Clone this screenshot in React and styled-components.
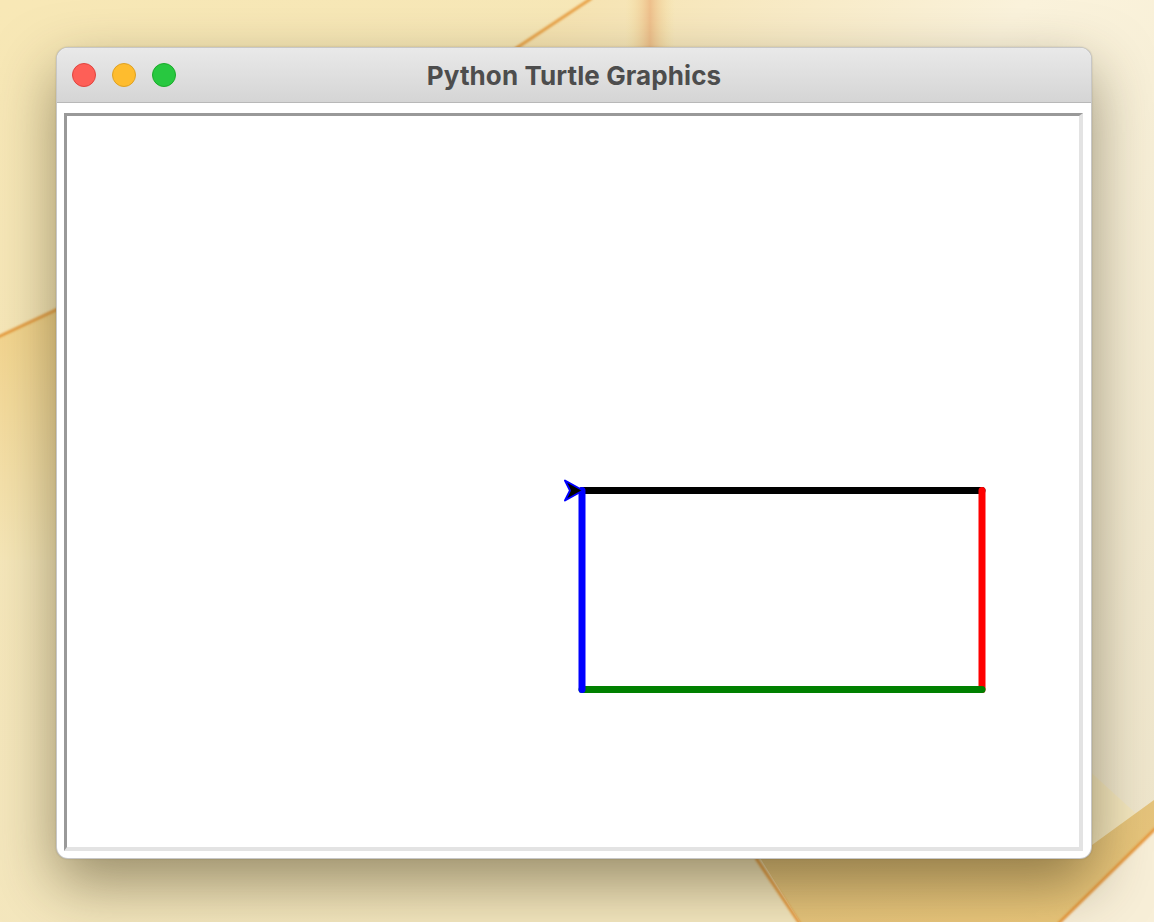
import React from 'react';
import styled, { createGlobalStyle } from 'styled-components';

const lights = [
  { fill: '#fe5f57', edge: '#e0443e' },
  { fill: '#febc2e', edge: '#dea123' },
  { fill: '#28c840', edge: '#1aab29' },
];

// pen strokes in canvas coordinates, drawn in order
const strokes = [
  { color: '#000000', x1: 515, y1: 374, x2: 915, y2: 374 },
  { color: '#ff0000', x1: 915, y1: 374, x2: 915, y2: 573 },
  { color: '#008000', x1: 915, y1: 573, x2: 515, y2: 573 },
  { color: '#0000ff', x1: 515, y1: 573, x2: 515, y2: 374 },
];

const App = () => {
  return (
    <>
      <GlobalStyle />
      <Desktop>
        <Wallpaper viewBox="0 0 1154 922" preserveAspectRatio="none">
          <defs>
            <linearGradient id="base" x1="0" y1="0" x2="0.4" y2="1">
              <stop offset="0" stopColor="#f8e8b6" />
              <stop offset="1" stopColor="#f4e7bf" />
            </linearGradient>
            <linearGradient id="topRight" x1="0" y1="0" x2="1" y2="1">
              <stop offset="0" stopColor="#f6e2ad" />
              <stop offset="0.4" stopColor="#fbf3dc" />
              <stop offset="1" stopColor="#efe6cc" />
            </linearGradient>
            <linearGradient id="leftBand" x1="0" y1="0" x2="0" y2="1">
              <stop offset="0" stopColor="#eebc5c" />
              <stop offset="0.35" stopColor="#f3d58e" />
              <stop offset="1" stopColor="#f6e7b8" />
            </linearGradient>
            <linearGradient id="bottomGold" x1="0" y1="0" x2="1" y2="1">
              <stop offset="0" stopColor="#dfc07e" />
              <stop offset="1" stopColor="#ecc87a" />
            </linearGradient>
            <linearGradient id="streak" x1="0" y1="0" x2="1" y2="0">
              <stop offset="0" stopColor="#f6e4a4" stopOpacity="0" />
              <stop offset="0.5" stopColor="#efc08c" />
              <stop offset="1" stopColor="#f6e4a4" stopOpacity="0" />
            </linearGradient>
            <filter id="soft">
              <feGaussianBlur stdDeviation="1.2" />
            </filter>
          </defs>
          <rect x="0" y="0" width="1154" height="922" fill="url(#base)" />
          <polygon points="590,0 1154,0 1154,830 760,470 515,47" fill="url(#topRight)" />
          <rect x="625" y="0" width="50" height="48" fill="url(#streak)" />
          <line x1="515" y1="49" x2="592" y2="-2" stroke="#e9a246" strokeWidth="3" filter="url(#soft)" />
          <polygon points="0,336 300,200 300,560 0,560" fill="url(#leftBand)" />
          <line x1="-2" y1="337" x2="60" y2="308" stroke="#e69a3c" strokeWidth="3" filter="url(#soft)" />
          <polygon points="752,845 1092,845 1154,800 1154,830 1060,922 800,922" fill="url(#bottomGold)" />
          <line x1="756" y1="858" x2="800" y2="924" stroke="#e89a3e" strokeWidth="3" filter="url(#soft)" />
          <polygon points="1060,922 1154,830 1154,922" fill="#f8efd8" />
          <line x1="1058" y1="924" x2="1156" y2="828" stroke="#e8963a" strokeWidth="3" filter="url(#soft)" />
        </Wallpaper>

        <Window>
          <TitleBar>
            <Lights>
              {lights.map((l, i) => (
                <Light key={i} $fill={l.fill} $edge={l.edge} />
              ))}
            </Lights>
            <Title>Python Turtle Graphics</Title>
            <span />
          </TitleBar>

          <WindowBody>
            <Canvas>
              <Drawing viewBox="0 0 1012 730">
                {strokes.map((s, i) => (
                  <line
                    key={i}
                    x1={s.x1}
                    y1={s.y1}
                    x2={s.x2}
                    y2={s.y2}
                    stroke={s.color}
                    strokeWidth="7"
                    strokeLinecap="round"
                  />
                ))}
                {/* classic turtle cursor, heading east */}
                <polygon
                  points="516,374 498,364 503,374 498,384"
                  fill="#000000"
                  stroke="#0000ff"
                  strokeWidth="2"
                  strokeLinejoin="round"
                />
              </Drawing>
            </Canvas>
          </WindowBody>
        </Window>
      </Desktop>
    </>
  );
};

const GlobalStyle = createGlobalStyle`
  body {
    margin: 0;
    font-family: Inter, "Liberation Sans", sans-serif;
  }
`;

const Desktop = styled.div`
  position: relative;
  width: 1154px;
  height: 922px;
  overflow: hidden;
  box-sizing: border-box;
  padding: 47px 0 0 56px;
`;

const Wallpaper = styled.svg`
  position: absolute;
  inset: 0;
  width: 100%;
  height: 100%;
  z-index: 0;
`;

const Window = styled.div`
  position: relative;
  z-index: 1;
  width: 1036px;
  height: 812px;
  box-sizing: border-box;
  display: flex;
  flex-direction: column;
  background-color: #ffffff;
  border: 1px solid rgba(0, 0, 0, 0.22);
  border-radius: 12px;
  overflow: hidden;
  box-shadow: 0 24px 60px rgba(60, 50, 20, 0.5), 0 0 2px rgba(0, 0, 0, 0.2);
`;

const TitleBar = styled.div`
  height: 54px;
  flex-shrink: 0;
  display: grid;
  grid-template-columns: 1fr auto 1fr;
  align-items: center;
  padding: 0 15px;
  background: linear-gradient(#e9e9e9, #d5d5d5);
  border-bottom: 1px solid #b8b8b8;
`;

const Lights = styled.div`
  display: flex;
  gap: 16px;
`;

const Light = styled.span`
  width: 24px;
  height: 24px;
  box-sizing: border-box;
  border-radius: 50%;
  background-color: ${props => props.$fill};
  border: 1px solid ${props => props.$edge};
`;

const Title = styled.div`
  font-family: Inter, "Liberation Sans", sans-serif;
  font-size: 26px;
  font-weight: 700;
  letter-spacing: 0.1px;
  color: #4d4d4d;
  white-space: nowrap;
`;

const WindowBody = styled.div`
  flex: 1;
  display: flex;
  padding: 10px 8px 7px 7px;
`;

const Canvas = styled.div`
  flex: 1;
  display: flex;
  background-color: #ffffff;
  border-top: 3px solid #999999;
  border-left: 3px solid #999999;
  border-right: 4px solid #e3e3e3;
  border-bottom: 4px solid #e3e3e3;
`;

const Drawing = styled.svg`
  display: block;
  width: 100%;
  height: 100%;
`;

export default App;
